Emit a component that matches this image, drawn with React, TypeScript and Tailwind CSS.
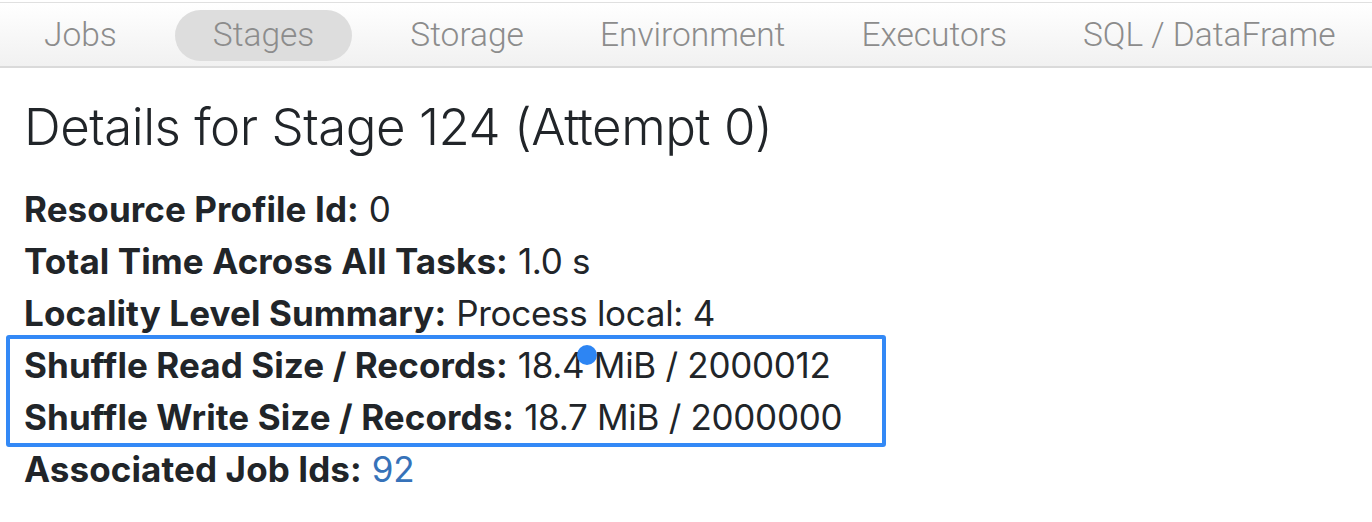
const tabs = ['Jobs', 'Stages', 'Storage', 'Environment', 'Executors', 'SQL / DataFrame'];

const rows: { label: string; value: string; link?: boolean }[] = [
  { label: 'Resource Profile Id:', value: '0' },
  { label: 'Total Time Across All Tasks:', value: '1.0 s' },
  { label: 'Locality Level Summary:', value: 'Process local: 4' },
  { label: 'Shuffle Read Size / Records:', value: '18.4 MiB / 2000012' },
  { label: 'Shuffle Write Size / Records:', value: '18.7 MiB / 2000000' },
  { label: 'Associated Job Ids:', value: '92', link: true },
];

function Row({ label, value, link }: { label: string; value: string; link?: boolean }) {
  return (
    <li className="h-[52px] flex items-center whitespace-nowrap">
      <strong className="font-bold tracking-[0.1px]">{label}</strong>
      <span className="ml-[10px] tracking-[-0.3px]">
        {link ? <a className="text-[#3672b9]">{value}</a> : value}
      </span>
    </li>
  );
}

export default function App() {
  return (
    <div className="w-[1372px] h-[522px] bg-white overflow-hidden font-['Inter',sans-serif] text-[#212529]">
      {/* Navbar */}
      <div className="mt-[2px] border-t border-[#e0e0e0] h-[66px] bg-gradient-to-b from-white to-[#f1f1f1] border-b-2 border-b-[#dadada] flex items-center pl-[6px]">
        {tabs.map((t) => (
          <div
            key={t}
            className={`mt-[2px] h-[51px] px-[38px] shrink-0 whitespace-nowrap flex items-center rounded-full text-[33.5px] font-light text-[#8c8c8c] font-['Roboto',sans-serif] ${
              t === 'Stages' ? 'bg-[#dddddd] mx-[20px]' : ''
            }`}
          >
            {t}
          </div>
        ))}
      </div>

      <div className="px-[24px]">
        <h3 className="mt-[26px] text-[51px] font-light leading-[66px] tracking-[-0.5px]">
          Details for Stage 124 (Attempt 0)
        </h3>

        <ul className="mt-[23px] text-[35px] relative">
          {rows.slice(0, 3).map((r) => (
            <Row key={r.label} {...r} />
          ))}
          <div className="-mx-[18px] -my-[4px] px-[14px] border-4 border-[#3389f6] rounded-[3px] w-[880px] relative">
            {rows.slice(3, 5).map((r) => (
              <Row key={r.label} {...r} />
            ))}
            <span className="absolute left-[567px] top-[6px] w-[20px] h-[20px] rounded-full bg-[#2d85f3]" />
          </div>
          {rows.slice(5).map((r) => (
            <Row key={r.label} {...r} />
          ))}
        </ul>
      </div>
    </div>
  );
}
